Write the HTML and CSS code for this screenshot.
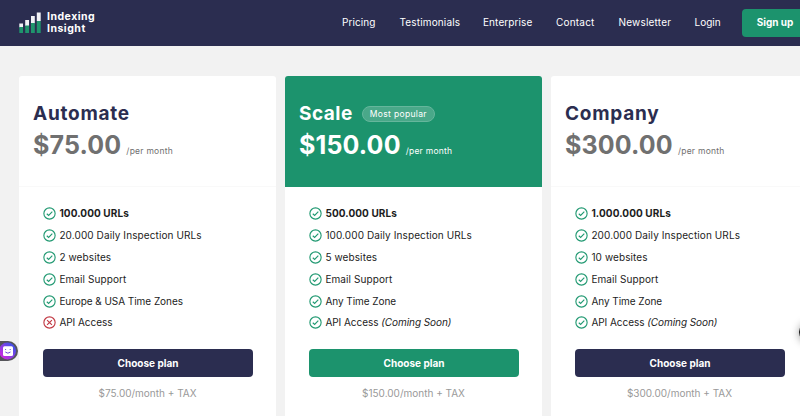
FILE: index.html
```html
<!DOCTYPE html>
<html lang="en">
  <head>
    <meta charset="UTF-8" />
    <meta name="viewport" content="width=device-width, initial-scale=1.0" />
    <title>Pricing - Indexing Insight</title>
    <link rel="stylesheet" href="styles.css">
  </head>
  <body>
    <svg class="sprite">
      <symbol id="check" viewBox="0 0 24 24">
        <circle cx="12" cy="12" r="10.4" />
        <path d="M7 12.5l3.4 3.2 6.8-7" />
      </symbol>
      <symbol id="cross" viewBox="0 0 24 24">
        <circle cx="12" cy="12" r="10.4" />
        <path d="M7.5 7.5l9 9M16.5 7.5l-9 9" />
      </symbol>
    </svg>

    <header class="header">
      <a class="logo">
        <svg class="logo-mark" viewBox="0 0 22 21">
          <path class="bar-top" d="M.3 11.5h3.7v4H.3zM6.2 8h3.8v6H6.2zM12 4h3.8v7.5H12zM17.8.5h3.9V9h-3.9z" />
          <path class="bar-base" d="M.3 15h3.7v6H.3zM6.2 13.5h3.8V21H6.2zM12 11h3.8v10H12zM17.8 9h3.9v12h-3.9z" />
        </svg>
        <span class="logo-text"><span>Indexing</span><span>Insight</span></span>
      </a>
      <nav class="nav">
        <a class="nav-pricing">Pricing</a>
        <a class="nav-testimonials">Testimonials</a>
        <a class="nav-enterprise">Enterprise</a>
        <a class="nav-contact">Contact</a>
        <a class="nav-newsletter">Newsletter</a>
        <a class="nav-login">Login</a>
      </nav>
      <a class="signup">Sign up</a>
    </header>

    <main class="plans">
      <section class="plan">
        <div class="plan-header">
          <div class="plan-title"><h2>Automate</h2></div>
          <div class="plan-price"><strong>$75.00</strong><span>/per month</span></div>
        </div>
        <div class="plan-body">
          <ul class="features">
            <li><svg><use href="#check" /></svg><b>100.000 URLs</b></li>
            <li><svg><use href="#check" /></svg>20.000 Daily Inspection URLs</li>
            <li><svg><use href="#check" /></svg>2 websites</li>
            <li><svg><use href="#check" /></svg>Email Support</li>
            <li class="tight"><svg><use href="#check" /></svg>Europe &amp; USA Time Zones</li>
            <li class="tight"><svg class="no"><use href="#cross" /></svg>API Access</li>
          </ul>
          <button class="btn">Choose plan</button>
          <p class="tax">$75.00/month + TAX</p>
        </div>
      </section>

      <section class="plan plan-popular">
        <div class="plan-header">
          <div class="plan-title"><h2>Scale</h2><span class="badge">Most popular</span></div>
          <div class="plan-price"><strong>$150.00</strong><span>/per month</span></div>
        </div>
        <div class="plan-body">
          <ul class="features">
            <li><svg><use href="#check" /></svg><b>500.000 URLs</b></li>
            <li><svg><use href="#check" /></svg>100.000 Daily Inspection URLs</li>
            <li><svg><use href="#check" /></svg>5 websites</li>
            <li><svg><use href="#check" /></svg>Email Support</li>
            <li class="tight"><svg><use href="#check" /></svg>Any Time Zone</li>
            <li class="tight"><svg><use href="#check" /></svg><span>API Access <i>(Coming Soon)</i></span></li>
          </ul>
          <button class="btn">Choose plan</button>
          <p class="tax">$150.00/month + TAX</p>
        </div>
      </section>

      <section class="plan">
        <div class="plan-header">
          <div class="plan-title"><h2>Company</h2></div>
          <div class="plan-price"><strong>$300.00</strong><span>/per month</span></div>
        </div>
        <div class="plan-body">
          <ul class="features">
            <li><svg><use href="#check" /></svg><b>1.000.000 URLs</b></li>
            <li><svg><use href="#check" /></svg>200.000 Daily Inspection URLs</li>
            <li><svg><use href="#check" /></svg>10 websites</li>
            <li><svg><use href="#check" /></svg>Email Support</li>
            <li class="tight"><svg><use href="#check" /></svg>Any Time Zone</li>
            <li class="tight"><svg><use href="#check" /></svg><span>API Access <i>(Coming Soon)</i></span></li>
          </ul>
          <button class="btn">Choose plan</button>
          <p class="tax">$300.00/month + TAX</p>
        </div>
      </section>
    </main>

    <div class="widget">
      <svg viewBox="0 0 18 20">
        <defs>
          <linearGradient id="glow" x1="0" y1="1" x2="1" y2="0">
            <stop offset="0.2" stop-color="#c22fe0" />
            <stop offset="0.8" stop-color="#4a50e8" />
          </linearGradient>
        </defs>
        <path d="M0 0h8a10 10 0 0 1 0 20H0z" fill="#55555a" />
        <circle cx="7.5" cy="10" r="8.5" fill="url(#glow)" />
        <rect x="3" y="5.2" width="10" height="9.8" rx="1.5" fill="#fff" />
        <path d="M5.6 8v1M10.2 8v1M5.3 11q2.6 2.4 5.2 0" fill="none" stroke="#6a48d8" />
      </svg>
    </div>
    <div class="launcher"></div>
  </body>
</html>
```

FILE: styles.css
```css
* {
  margin: 0;
  padding: 0;
  box-sizing: border-box;
}

body {
  height: 416px;
  overflow: hidden;
  background: #f2f2f2;
  color: #1c1c1c;
  font-family: Inter, sans-serif;
  font-size: 10px;
}

.sprite {
  display: none;
}

.header {
  display: flex;
  align-items: center;
  width: 820px;
  height: 46px;
  padding: 0 0 1px 19px;
  background: #2b2d50;
  color: #fff;
}

.logo {
  display: flex;
  align-items: center;
  gap: 6px;
  width: 323px;
  font-size: 10.5px;
  font-weight: 700;
  letter-spacing: 0.5px;
}

.logo-mark {
  width: 22px;
  height: 21px;
  margin-top: -1px;
}

.logo-text {
  display: flex;
  flex-direction: column;
}

.logo-text span {
  height: 12px;
  line-height: 12px;
}

.bar-top {
  fill: #f1f1f6;
}

.bar-base {
  fill: #1f946d;
}

.nav {
  display: flex;
  width: 400px;
  padding-bottom: 2px;
}

.nav-pricing {
  width: 57.5px;
  letter-spacing: 0.1px;
}

.nav-testimonials {
  width: 83.5px;
  letter-spacing: 0.15px;
}

.nav-enterprise {
  width: 73px;
  letter-spacing: 0.1px;
}

.nav-contact {
  width: 62.5px;
  letter-spacing: 0.2px;
}

.nav-newsletter {
  width: 76px;
  letter-spacing: 0.2px;
}

.signup {
  width: 66px;
  height: 28px;
  border-radius: 4px;
  background: #1c936d;
  font-weight: 700;
  line-height: 27px;
  text-align: center;
}

.plans {
  display: grid;
  grid-template-columns: repeat(3, 257px);
  gap: 9px;
  padding: 30px 0 0 19px;
}

.plan {
  height: 345px;
  border-radius: 3px;
  background: #fff;
  overflow: hidden;
}

.plan-header {
  height: 111px;
  padding: 24px 14px 0;
  border-bottom: 1px solid #f9f9f9;
}

.plan-title {
  display: flex;
  align-items: center;
  gap: 9px;
  height: 27px;
}

.plan-title h2 {
  color: #2b2d50;
  font-size: 19px;
  font-weight: 700;
  letter-spacing: 0.75px;
}

.plan-price {
  display: flex;
  align-items: baseline;
  gap: 5px;
  color: #707070;
  line-height: 36px;
}

.plan-price strong {
  font-size: 25px;
  letter-spacing: 0.15px;
}

.plan-price span {
  font-size: 8.5px;
  letter-spacing: 0.25px;
}

.plan-popular .plan-header {
  border-color: #1c936d;
  background: #1c936d;
}

.plan-popular h2,
.plan-popular .plan-price {
  color: #fff;
}

.plan-popular h2 {
  letter-spacing: 0.5px;
}

.badge {
  width: 73px;
  height: 16px;
  border: 1px solid #65b69c;
  border-radius: 8px;
  background: #49a889;
  color: #fff;
  font-size: 8.5px;
  letter-spacing: 0.35px;
  line-height: 14px;
  text-align: center;
}

.plan-body {
  padding: 15px 24px 0;
}

.features {
  list-style: none;
}

.features li {
  display: flex;
  align-items: center;
  gap: 3px;
  height: 21.9px;
  letter-spacing: 0.1px;
}

.features .tight {
  letter-spacing: -0.05px;
}

.features svg {
  width: 13px;
  height: 13px;
  margin: 1px 0 0 0.4px;
  fill: none;
  stroke: #239a73;
  stroke-width: 2.1;
}

.features svg.no {
  stroke: #c23a45;
}

.btn {
  display: block;
  width: 210px;
  height: 28px;
  margin-top: 16px;
  border: none;
  border-radius: 4px;
  background: #2b2d50;
  color: #fff;
  font-family: inherit;
  font-size: 10px;
  font-weight: 700;
}

.plan-popular .btn {
  background: #1c936d;
}

.tax {
  margin-top: 9px;
  color: #999;
  line-height: 15px;
  text-align: center;
}

/* floating widgets on the window edges */
.widget {
  position: absolute;
  top: 341px;
  left: 0;
  width: 18px;
  height: 20px;
}

.widget svg {
  display: block;
}

.launcher {
  position: fixed;
  top: 322px;
  left: 799px;
  width: 20px;
  height: 20px;
  border-radius: 50%;
  background: #111;
  box-shadow: 0 1px 8px rgba(0, 0, 0, 0.4);
}
```
